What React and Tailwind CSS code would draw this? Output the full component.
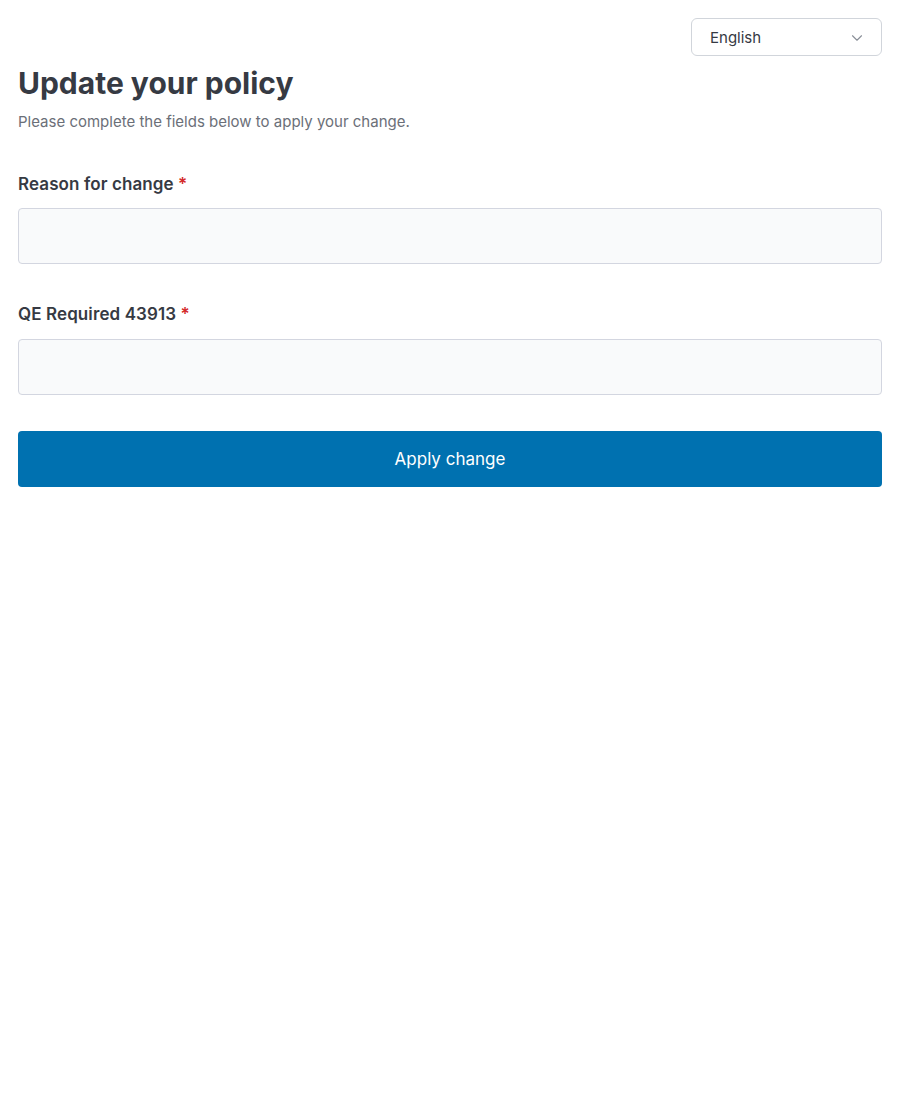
import React, { useState } from 'react';
import { ChevronDown } from 'lucide-react';

export default function App() {
  const [reason, setReason] = useState('');
  const [qe, setQe] = useState('');

  return (
    <div className="min-h-[1100px] bg-white p-[18px] text-[#363a43] font-['Inter',sans-serif]">
      {/* Language picker */}
      <div className="flex justify-end">
        <button className="flex h-[38px] w-[191px] items-center justify-between rounded-md border border-[#d1d5db] bg-white pb-[0px] pt-[2px] pl-[18px] pr-[15px] text-[15px] text-[#363a43]">
          English
          <ChevronDown className="h-[18px] w-[18px] text-[#8a8f98]" strokeWidth={1.5} />
        </button>
      </div>

      <h1 className="mt-[9px] text-[30px] font-bold leading-[36px]">Update your policy</h1>
      <p className="mt-[10px] text-[15px] leading-[22px] text-[#6b6f78]">
        Please complete the fields below to apply your change.
      </p>

      <form className="flex flex-col" onSubmit={(e) => e.preventDefault()}>
        <label className="mt-[39px] text-[17px] font-semibold leading-[24px] tracking-[0.1px]">
          Reason for change <span className="text-[#d42a2a]">*</span>
        </label>
        <input
          value={reason}
          onChange={(e) => setReason(e.target.value)}
          className="mt-[12px] h-[56px] w-full rounded-[4px] border border-[#d3d6e0] bg-[#f9fafb] px-3 text-[16px] outline-none"
        />

        <label className="mt-[38px] text-[17px] font-semibold leading-[24px] tracking-[0.1px]">
          QE Required 43913 <span className="text-[#d42a2a]">*</span>
        </label>
        <input
          value={qe}
          onChange={(e) => setQe(e.target.value)}
          className="mt-[13px] h-[56px] w-full rounded-[4px] border border-[#d3d6e0] bg-[#f9fafb] px-3 text-[16px] outline-none"
        />

        <button
          type="submit"
          className="mt-[36px] h-[56px] w-full rounded-[4px] bg-[#0071b0] pt-[2px] text-[17px] font-normal text-white"
        >
          Apply change
        </button>
      </form>
    </div>
  );
}
